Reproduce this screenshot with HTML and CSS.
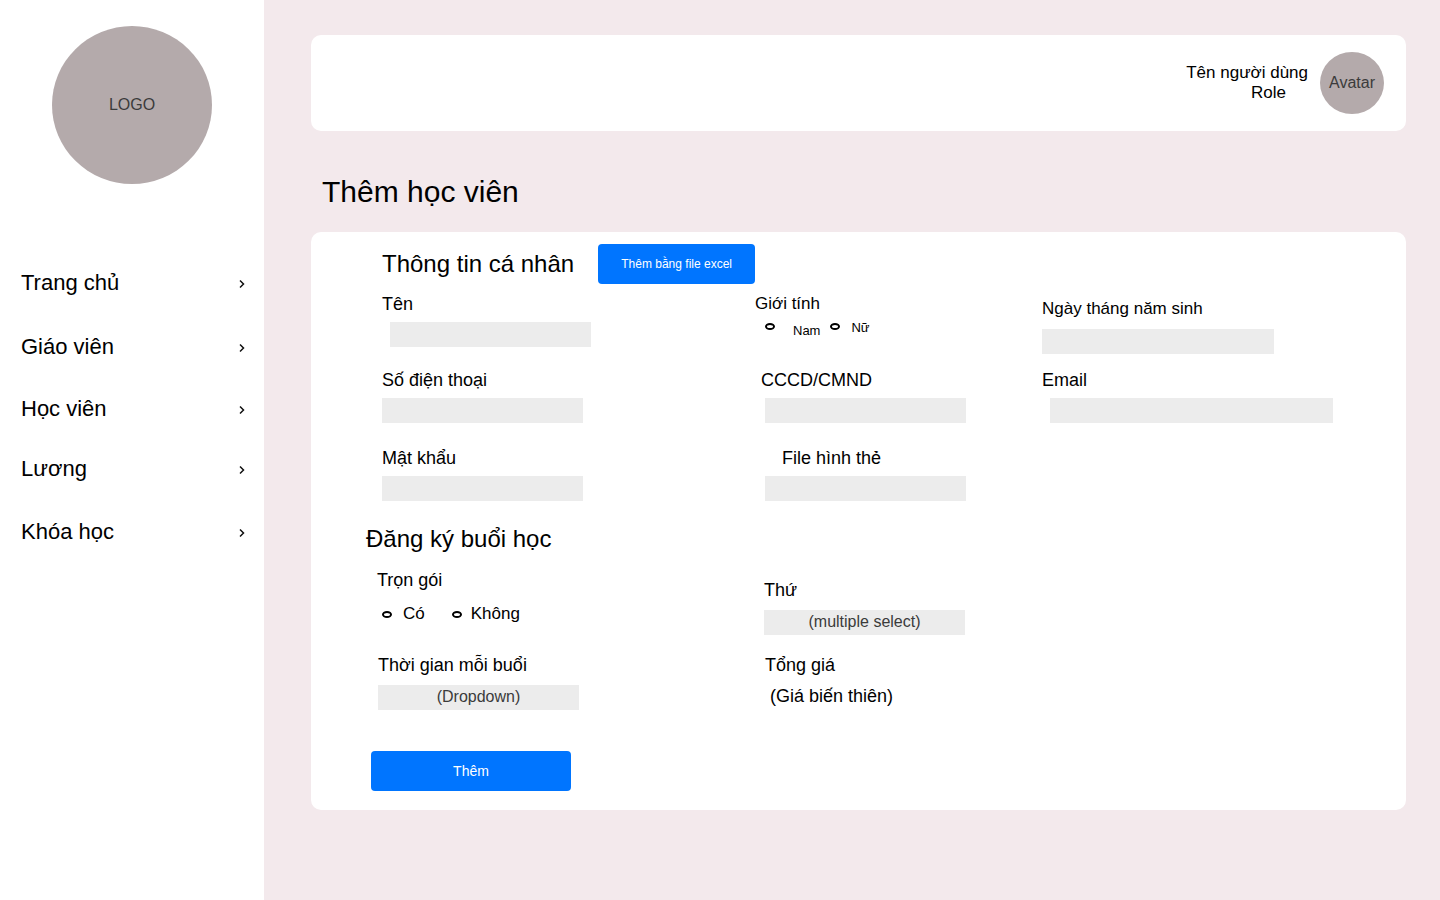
FILE: index.html
```html
<!DOCTYPE html>
<html lang="vi">
<head>
<meta charset="utf-8">
<meta name="viewport" content="width=device-width, initial-scale=1">
<title>Thêm học viên</title>
<link rel="stylesheet" href="styles.css">
</head>
<body>
<div class="layout">
  <aside class="sidebar">
    <div class="logo">LOGO</div>
    <nav class="nav">
      <a class="nav-link" href="#">Trang chủ <svg class="chevron" viewBox="0 0 6 10"><path d="M1 1.5 4.5 5 1 8.5"/></svg></a>
      <a class="nav-link" href="#">Giáo viên <svg class="chevron" viewBox="0 0 6 10"><path d="M1 1.5 4.5 5 1 8.5"/></svg></a>
      <a class="nav-link" href="#">Học viên <svg class="chevron" viewBox="0 0 6 10"><path d="M1 1.5 4.5 5 1 8.5"/></svg></a>
      <a class="nav-link" href="#">Lương <svg class="chevron" viewBox="0 0 6 10"><path d="M1 1.5 4.5 5 1 8.5"/></svg></a>
      <a class="nav-link" href="#">Khóa học <svg class="chevron" viewBox="0 0 6 10"><path d="M1 1.5 4.5 5 1 8.5"/></svg></a>
    </nav>
  </aside>

  <main class="main">
    <header class="topbar">
      <div class="user">
        <div>Tên người dùng</div>
        <div class="user-role">Role</div>
      </div>
      <div class="avatar">Avatar</div>
    </header>

    <h1 class="page-title">Thêm học viên</h1>

    <form class="card">
      <section class="personal">
        <div class="section-head">
          <h2 class="section-title">Thông tin cá nhân</h2>
          <button class="button button-excel" type="button">Thêm bằng file excel</button>
        </div>
        <div class="grid grid-personal">
          <div class="field">
            <label class="label" for="name">Tên</label>
            <input class="input indent-small" id="name" type="text">
          </div>
          <fieldset class="field">
            <legend class="label label-small">Giới tính</legend>
            <div class="gender">
              <input class="radio" id="male" type="radio" name="gender">
              <label class="gender-male" for="male">Nam</label>
              <input class="radio" id="female" type="radio" name="gender">
              <label class="gender-female" for="female">Nữ</label>
            </div>
          </fieldset>
          <div class="field field-birthday">
            <label class="label label-small" for="birthday">Ngày tháng năm sinh</label>
            <input class="input input-date" id="birthday" type="date">
          </div>

          <div class="field">
            <label class="label" for="phone">Số điện thoại</label>
            <input class="input" id="phone" type="tel">
          </div>
          <div class="field">
            <label class="label label-id" for="citizen">CCCD/CMND</label>
            <input class="input indent" id="citizen" type="text">
          </div>
          <div class="field">
            <label class="label" for="email">Email</label>
            <input class="input input-email indent-small" id="email" type="email">
          </div>

          <div class="field">
            <label class="label" for="password">Mật khẩu</label>
            <input class="input" id="password" type="password">
          </div>
          <div class="field">
            <label class="label label-file" for="photo">File hình thẻ</label>
            <input class="input input-file indent" id="photo" type="file">
          </div>
        </div>
      </section>

      <section class="sessions">
        <h2 class="section-title">Đăng ký buổi học</h2>
        <div class="grid grid-sessions">
          <fieldset class="field">
            <legend class="label">Trọn gói</legend>
            <div class="package">
              <input class="radio" id="yes" type="radio" name="package">
              <label class="package-yes" for="yes">Có</label>
              <input class="radio" id="no" type="radio" name="package">
              <label class="package-no" for="no">Không</label>
            </div>
          </fieldset>
          <div class="field field-day">
            <label class="label" for="day">Thứ</label>
            <select class="input select" id="day"><option>(multiple select)</option></select>
          </div>
          <div class="field field-loose">
            <label class="label" for="duration">Thời gian mỗi buổi</label>
            <select class="input select" id="duration"><option>(Dropdown)</option></select>
          </div>
          <div class="field field-loose">
            <label class="label" for="total">Tổng giá</label>
            <output class="total" id="total">(Giá biến thiên)</output>
          </div>
        </div>
      </section>

      <button class="button button-submit" type="submit">Thêm</button>
    </form>
  </main>
</div>
</body>
</html>
```
FILE: styles.css
```css
* {
  box-sizing: border-box;
}

body {
  margin: 0;
  color: #000;
  background: #f3e9ec;
  font-family: "Liberation Sans", Arial, sans-serif;
}

button,
input,
select {
  font-family: inherit;
}

.layout {
  display: grid;
  grid-template-columns: 264px 1fr;
  min-height: 100vh;
}

.sidebar {
  padding-top: 26px;
  background: #fff;
}

.logo,
.avatar {
  display: flex;
  align-items: center;
  justify-content: center;
  border-radius: 50%;
  color: #3b3b3b;
  background: #b4aaab;
  font-size: 16px;
}

.logo {
  width: 160px;
  height: 158px;
  margin: 0 auto;
}

.nav {
  display: grid;
  grid-template-rows: 64px 62px 60px 63px auto;
  align-items: start;
  margin-top: 84px;
  padding: 0 19px 0 21px;
}

.nav-link {
  display: flex;
  align-items: center;
  justify-content: space-between;
  color: #000;
  font-size: 22px;
  line-height: 30px;
  text-decoration: none;
}

.chevron {
  width: 6px;
  height: 10px;
  margin-top: 2px;
  fill: none;
  stroke: #111;
  stroke-width: 1.5;
}

.main {
  padding: 35px 34px 35px 47px;
}

.topbar {
  display: flex;
  align-items: center;
  justify-content: flex-end;
  gap: 12px;
  height: 96px;
  padding: 0 22px;
  border-radius: 10px;
  background: #fff;
}

.user {
  font-size: 17px;
  line-height: 20px;
  text-align: right;
}

.user-role {
  padding-right: 22px;
}

.avatar {
  width: 64px;
  height: 62px;
}

.page-title {
  margin: 41px 0 20px 11px;
  font-size: 30px;
  font-weight: 400;
  line-height: 40px;
}

.card {
  padding: 12px 0 19px;
  border-radius: 10px;
  background: #fff;
}

.personal {
  padding-left: 71px;
}

.section-head {
  display: flex;
  align-items: center;
  gap: 24px;
}

.section-title {
  margin: 0;
  font-size: 24px;
  font-weight: 400;
  line-height: 28px;
}

.button {
  height: 40px;
  padding: 0;
  border: 0;
  border-radius: 4px;
  color: #fff;
  background: #0075ff;
}

.button-excel {
  width: 157px;
  font-size: 12px;
}

.button-submit {
  display: block;
  width: 200px;
  margin: 41px 0 0 60px;
  font-size: 14px;
}

.grid {
  display: grid;
}

.grid-personal {
  grid-template-columns: 373fr 287fr 364fr;
  grid-template-rows: minmax(76px, auto) minmax(78px, auto) auto;
  margin-top: 10px;
}

.field {
  min-width: 0;
  margin: 0;
  padding: 0;
  border: 0;
}

.field-birthday {
  padding-top: 5px;
}

.label {
  display: block;
  margin-bottom: 8px;
  padding: 0;
  font-size: 18px;
  line-height: 20px;
}

.label-small {
  font-size: 17px;
}

.label-id {
  padding-left: 6px;
}

.label-file {
  padding-left: 27px;
}

.input {
  display: block;
  width: 201px;
  height: 25px;
  padding: 0 6px;
  border: 0;
  border-radius: 0;
  color: #3b3b3b;
  background: #ececec;
  font-size: 16px;
}

.indent-small {
  margin-left: 8px;
}

.indent {
  margin-left: 10px;
}

.input-date {
  width: 232px;
}

.input-date::-webkit-datetime-edit,
.input-date::-webkit-calendar-picker-indicator {
  opacity: 0;
}

.input-email {
  width: 283px;
}

.input-file {
  color: transparent;
}

.input-file::file-selector-button {
  display: none;
}

.select {
  padding: 0 0 2px;
  appearance: none;
  text-align: center;
  text-align-last: center;
}

.radio {
  width: 10px;
  height: 7px;
  margin: 0;
  border: 2px solid #000;
  border-radius: 50%;
  background: #fff;
  appearance: none;
}

.radio:checked {
  background: #000;
}

.gender,
.package {
  display: flex;
  align-items: center;
}

.gender {
  height: 8px;
  padding-left: 10px;
  font-size: 13px;
}

.gender-male {
  padding-top: 8px;
  margin: 0 10px 0 18px;
}

.gender-female {
  padding-top: 2px;
  margin-left: 11px;
}

.sessions {
  padding: 24px 0 0 55px;
}

.grid-sessions {
  grid-template-columns: 387fr 642fr;
  grid-template-rows: minmax(85px, auto) auto;
  margin-top: 17px;
  padding-left: 11px;
}

.package {
  padding: 6px 0 0 5px;
  font-size: 17px;
  line-height: 20px;
}

.package-yes {
  margin: 0 27px 0 11px;
}

.package-no {
  margin-left: 9px;
}

.field-day {
  padding-top: 10px;
}

.field-birthday .label,
.field-day .label,
.field-loose .label {
  margin-bottom: 10px;
}

.field-loose {
  padding-left: 1px;
}

.total {
  display: block;
  padding-left: 5px;
  font-size: 18px;
  line-height: 22px;
}
```
